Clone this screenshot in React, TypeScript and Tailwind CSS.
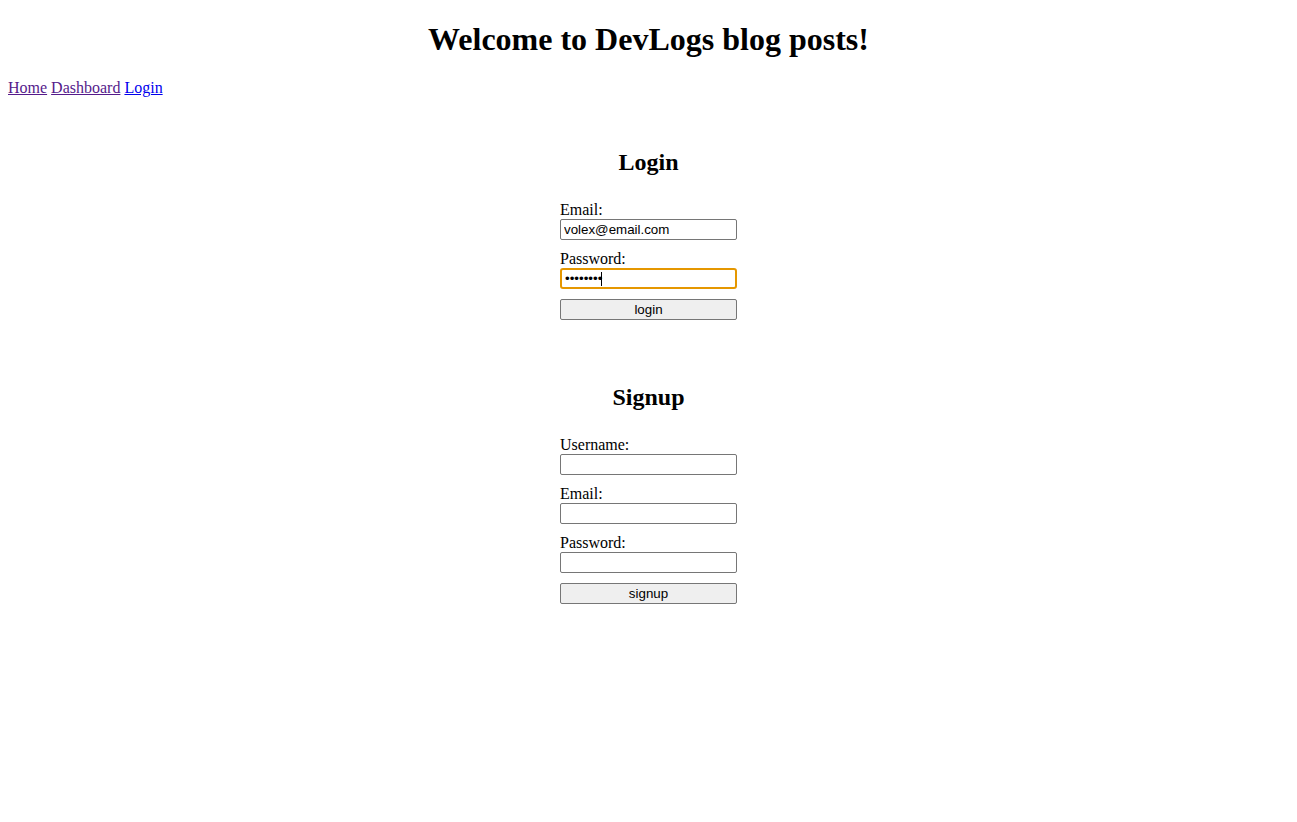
import { useState } from "react";

const serif = "font-['Liberation_Serif','Times_New_Roman',serif]";
const inputCls =
  "block w-[177px] h-[21px] px-[3px] border border-[#767676] rounded-[2px] bg-white text-[13.33px] text-black font-['Liberation_Sans',Arial,sans-serif] outline-none";
const buttonCls =
  "block w-[177px] h-[21px] border border-[#767676] rounded-[2px] bg-[#efefef] text-[13.33px] text-black font-['Liberation_Sans',Arial,sans-serif]";

function Field({
  label,
  type = "text",
  value,
  onChange,
  focused,
}: {
  label: string;
  type?: string;
  value: string;
  onChange: (v: string) => void;
  focused?: boolean;
}) {
  return (
    <div className="mb-[10px]">
      <label className="block leading-[18px] text-[16px]">{label}</label>
      <div className="relative">
        <input
          type={type}
          value={value}
          autoFocus={focused}
          onChange={(e) => onChange(e.target.value)}
          className={
            focused
              ? "block w-[177px] h-[21px] px-[3px] border-2 border-[#e59700] rounded-[3px] bg-white text-[13.33px] text-black font-['Liberation_Sans',Arial,sans-serif] outline-none caret-transparent"
              : inputCls
          }
        />
        {focused && <span className="absolute left-[41px] top-[4px] w-px h-[14px] bg-black" />}
      </div>
    </div>
  );
}

export default function App() {
  const [email, setEmail] = useState("volex@email.com");
  const [password, setPassword] = useState("********");
  const [username, setUsername] = useState("");
  const [signEmail, setSignEmail] = useState("");
  const [signPassword, setSignPassword] = useState("");

  return (
    <div className={`${serif} min-h-[822px] bg-white text-black px-2`}>
      <h1 className="pt-[21px] mb-[21px] text-center text-[32px] leading-[37px] font-bold">
        Welcome to DevLogs blog posts!
      </h1>
      <nav className="text-[16px] leading-[18px]">
        <a href="#" className="text-[#551a8b] underline">Home</a>{" "}
        <a href="#" className="text-[#551a8b] underline">Dashboard</a>{" "}
        <a href="#" className="text-[#0000ee] underline">Login</a>
      </nav>

      <div className="flex flex-col items-center mt-[51px]">
        <h2 className="text-[24px] leading-[28px] font-bold mb-[25px]">Login</h2>
        <form className="w-[177px]" onSubmit={(e) => e.preventDefault()}>
          <Field label="Email:" value={email} onChange={setEmail} />
          <Field label="Password:" type="password" value={password} onChange={setPassword} focused />
          <button type="submit" className={buttonCls}>login</button>
        </form>

        <h2 className="mt-[63px] text-[24px] leading-[28px] font-bold mb-[25px]">Signup</h2>
        <form className="w-[177px]" onSubmit={(e) => e.preventDefault()}>
          <Field label="Username:" value={username} onChange={setUsername} />
          <Field label="Email:" value={signEmail} onChange={setSignEmail} />
          <Field label="Password:" type="password" value={signPassword} onChange={setSignPassword} />
          <button type="submit" className={buttonCls}>signup</button>
        </form>
      </div>
    </div>
  );
}
